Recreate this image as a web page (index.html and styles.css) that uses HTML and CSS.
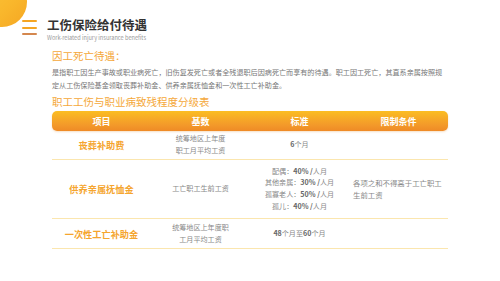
FILE: index.html
```html
<!DOCTYPE html>
<html lang="zh">
<head>
<meta charset="utf-8">
<link rel="stylesheet" href="styles.css">
</head>
<body>
<div class="page">
  <div class="corner"></div>
  <header class="head">
    <div class="menu"><span class="bar"></span><span class="bar"></span><span class="bar dark"></span></div>
    <div class="titles">
      <h1 class="title">工伤保险给付待遇</h1>
      <p class="sub">Work-related injury insurance benefits</p>
    </div>
  </header>
  <main class="content">
    <h2 class="sec">因工死亡待遇：</h2>
    <p class="para">是指职工因生产事故或职业病死亡，旧伤复发死亡或者全残退职后因病死亡而享有的待遇。职工因工死亡，其直系亲属按照规定从工伤保险基金领取丧葬补助金、供养亲属抚恤金和一次性工亡补助金。</p>
    <h2 class="sec sec2">职工工伤与职业病致残程度分级表</h2>
    <div class="table">
      <div class="thead">
        <div class="th">项目</div>
        <div class="th">基数</div>
        <div class="th">标准</div>
        <div class="th">限制条件</div>
      </div>
      <div class="row r1">
        <div class="cell label"><span>丧葬补助费</span></div>
        <div class="cell txt"><span>统筹地区上年度<br>职工月平均工资</span></div>
        <div class="cell txt"><span><b>6</b>个月</span></div>
        <div class="cell txt"></div>
      </div>
      <div class="row r2">
        <div class="cell label"><span>供养亲属抚恤金</span></div>
        <div class="cell txt"><span>工亡职工生前工资</span></div>
        <div class="cell txt"><span>配偶：<b>40% /</b>人月<br>其他亲属：<b>30% /</b>人月<br>孤寡老人：<b>50% /</b>人月<br>孤儿：<b>40% /</b>人月</span></div>
        <div class="cell txt limit"><span>各项之和不得高于工亡职工生前工资</span></div>
      </div>
      <div class="row r3">
        <div class="cell label"><span>一次性工亡补助金</span></div>
        <div class="cell txt"><span>统筹地区上年度职<br>工月平均工资</span></div>
        <div class="cell txt"><span><b>48</b>个月至<b>60</b>个月</span></div>
        <div class="cell txt"></div>
      </div>
    </div>
  </main>
</div>
</body>
</html>
```

FILE: styles.css
```css
* { box-sizing: border-box; margin: 0; padding: 0; }
html, body { width: 500px; height: 281px; background: #fff; overflow: hidden; }
body { font-family: "Noto Sans CJK SC", "Noto Sans", sans-serif; color: #777; }
.page { position: relative; width: 500px; height: 281px; overflow: hidden; }
.corner {
  position: absolute; left: -23px; top: -23px; width: 50px; height: 50px; border-radius: 50%;
  background: linear-gradient(135deg, #fbc73c 0%, #f9b72c 60%, #f5a623 100%);
}
.head { display: flex; align-items: flex-start; padding: 17px 0 0 22px; }
.menu { display: flex; flex-direction: column; gap: 4.5px; width: 15px; margin-top: 3px; margin-right: 10px; }
.bar { display: block; height: 2px; background: #f5a623; border-radius: 1px; }
.bar.dark { background: #d4874e; }
.titles { display: flex; flex-direction: column; }
.title { font-size: 12.5px; line-height: 15px; font-weight: 700; color: #333; }
.sub { font-size: 5.6px; line-height: 7px; color: #9a9a9a; margin-top: 2.5px; }
.content { padding: 0 0 0 52px; width: 448px; }
.sec { font-size: 10.5px; line-height: 14px; font-weight: 400; color: #f5a83a; margin-top: 7.5px; }
.sec2 { margin-top: 3px; }
.para { font-size: 7.1px; line-height: 13px; color: #777; width: 396px; margin-top: 3px; }
.table { width: 396px; margin-top: 2px; }
.thead {
  display: grid; grid-template-columns: repeat(4, 1fr); height: 20px; border-radius: 5px;
  background: linear-gradient(180deg, #fbbd22 0%, #f3992a 70%, #ef8a26 100%);
  box-shadow: 0 1px 2px rgba(220, 130, 30, 0.25);
}
.th { display: flex; align-items: center; justify-content: center; color: #fff; font-weight: 700; font-size: 9px; }
.row { display: grid; grid-template-columns: repeat(4, 1fr); border-bottom: 1px solid #fbe6ae; }
.r1 { height: 29px; }
.r2 { height: 59px; }
.r3 { height: 30px; }
.cell { display: flex; align-items: center; justify-content: center; text-align: center; }
.label { font-size: 9.2px; font-weight: 700; color: #f5a52e; }
.txt { font-size: 7.1px; line-height: 11.6px; color: #888; }
.txt b { font-weight: 700; color: #666; }
.limit { justify-content: flex-start; text-align: left; padding: 0 0 0 4px; font-size: 7.4px; }
```
